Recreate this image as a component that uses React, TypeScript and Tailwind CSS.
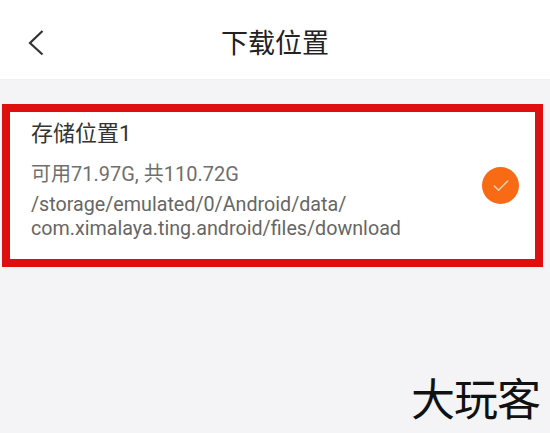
import { Check } from 'lucide-react';

const cjk = "font-['Roboto','Noto_Sans_CJK_SC',sans-serif]";

export default function App() {
  return (
    <div className={`flex h-[433px] w-[550px] flex-col overflow-hidden bg-[#f4f4f6] ${cjk}`}>
      <header className="relative flex h-[80px] shrink-0 items-center justify-center border-b border-[#f0f0f0] bg-white pt-[9px]">
        <svg className="absolute left-[26px] top-[28px]" width="20" height="30" viewBox="0 0 20 30" fill="none">
          <path d="M16.5 3 L4 15 L16.5 26.5" stroke="#333333" strokeWidth="2.2" />
        </svg>
        <h1 className="text-[27px] leading-none text-[#222222]">下载位置</h1>
      </header>

      <section className="ml-[2px] mt-[24px] flex h-[163px] w-[541px] items-center justify-between border-[8px] border-[#e00f0f] bg-white pl-[21px] pr-[16px]">
        <div className="-mt-[8px] flex flex-col">
          <div className="text-[22px] leading-[24px] text-[#333333]">存储位置1</div>
          <div className="mt-[16px] text-[20px] leading-[24px] text-[#6f6f6f]">可用71.97G, 共110.72G</div>
          <div className="mt-[7px] text-[19.7px] leading-[24px] text-[#666666]">
            /storage/emulated/0/Android/data/
            <br />
            com.ximalaya.ting.android/files/download
          </div>
        </div>
        <div className="flex h-[37px] w-[37px] shrink-0 items-center justify-center rounded-full bg-[#f86a14]">
          <Check className="text-[#fbd3b4]" size={20} strokeWidth={1.8} />
        </div>
      </section>

      <div className="mr-[10px] mt-[112px] self-end text-[44px] leading-none tracking-[-1px] text-[#111111]">
        大玩客
      </div>
    </div>
  );
}
